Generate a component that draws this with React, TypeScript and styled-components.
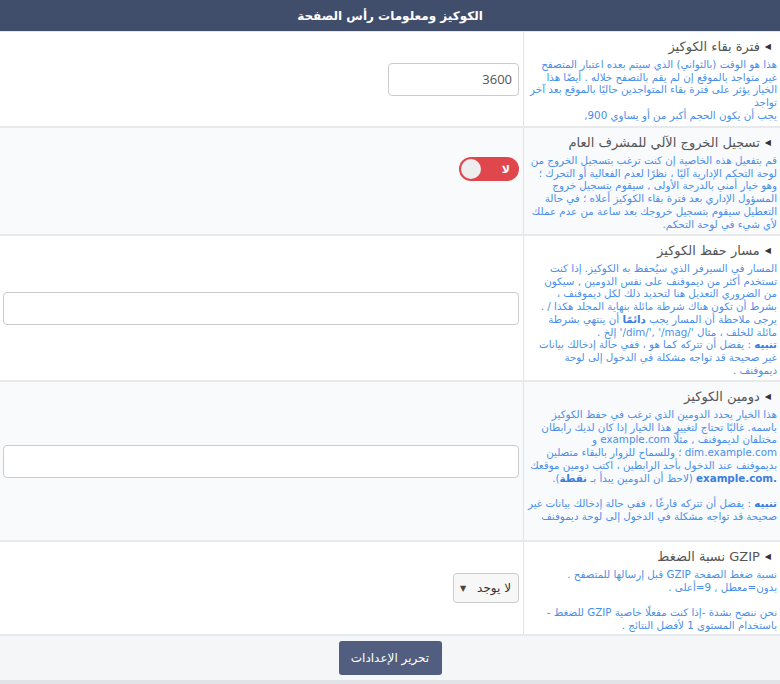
import React from "react";
import styled, { createGlobalStyle } from "styled-components";

const Global = createGlobalStyle`
  html, body { margin: 0; padding: 0; background: #fff; }
  body { font-family: "DejaVu Sans", sans-serif; }
  * { box-sizing: border-box; }
`;

const Page = styled.div`
  width: 780px;
  direction: rtl;
  background: #fff;
`;

const Header = styled.div`
  height: 32px;
  background: #404d6b;
  color: #fff;
  display: flex;
  align-items: center;
  justify-content: center;
  font-weight: bold;
  font-size: 12px;
  border-bottom: 1px solid #e3e5e8;
`;

const Row = styled.div<{ $alt?: boolean; $h: number }>`
  display: grid;
  grid-template-columns: 257px 1fr;
  height: ${(p) => p.$h}px;
  background: ${(p) => (p.$alt ? "#f9fafc" : "#fff")};
  border-bottom: 2px solid #e8e9eb;
`;

const Label = styled.div`
  border-left: 1px solid #e3e3e3;
  padding: 7px 3px 4px 4px;
  overflow: hidden;
`;

const Title = styled.div`
  color: #555;
  font-size: 13px;
  padding-right: 6px;
  margin-bottom: 4px;
  display: flex;
  align-items: center;
  gap: 5px;
`;

const Arrow = styled.span`
  font-size: 8px;
  color: #333;
`;

const Desc = styled.div`
  color: #4a8fe7;
  font-size: 10.3px;
  line-height: 12.7px;
  b { font-weight: bold; color: #3a7ee0; }
`;

const Control = styled.div<{ $nudge?: number }>`
  display: flex;
  align-items: center;
  padding: 0 4px ${(p) => p.$nudge ?? 0}px 3px;
`;

const Input = styled.input<{ $w?: number }>`
  width: ${(p) => (p.$w ? `${p.$w}px` : "100%")};
  height: 33px;
  border: 1px solid #ccc;
  border-radius: 4px;
  background: #fff;
  padding: 0 6px;
  font-family: "Open Sans", "Liberation Sans", sans-serif;
  font-size: 13px;
  color: #555;
  direction: rtl;
  outline: none;
`;

const Toggle = styled.div`
  width: 60px;
  height: 24px;
  border-radius: 12px;
  background: #e0474c;
  display: flex;
  align-items: center;
  justify-content: space-between;
  padding: 0 9px 0 2px;
`;

const ToggleText = styled.span`
  color: #fff;
  font-weight: bold;
  font-size: 11px;
`;

const Knob = styled.span`
  width: 20px;
  height: 20px;
  border-radius: 50%;
  background: #eeeeee;
`;

const Select = styled.div`
  width: 66px;
  height: 30px;
  border: 1px solid #ccc;
  border-radius: 4px;
  background: #f7f7f7;
  display: flex;
  align-items: center;
  justify-content: space-between;
  padding: 0 7px 0 6px;
  font-size: 12px;
  color: #333;
`;

const Caret = styled.span`
  font-size: 8px;
  color: #444;
`;

const Footer = styled.div`
  height: 48px;
  background: #f5f6f8;
  border-bottom: 4px solid #e1e3e6;
  display: flex;
  align-items: center;
  justify-content: center;
`;

const Button = styled.button`
  width: 103px;
  height: 34px;
  background: #515e7f;
  color: #fff;
  border: none;
  border-radius: 3px;
  font-family: "DejaVu Sans", sans-serif;
  font-size: 12px;
  cursor: pointer;
`;

const Field: React.FC<{ title: string; children: React.ReactNode }> = ({ title, children }) => (
  <Label>
    <Title>
      <Arrow>◀</Arrow>
      <span>{title}</span>
    </Title>
    <Desc>{children}</Desc>
  </Label>
);

export default function App() {
  return (
    <Page>
      <Global />
      <Header>الكوكيز ومعلومات رأس الصفحة</Header>

      <Row $h={96}>
        <Field title="فترة بقاء الكوكيز">
          هذا هو الوقت (بالثواني) الذي سيتم بعده اعتبار المتصفح غير متواجد بالموقع إن لم يقم بالتصفح خلاله . أيضًا هذا الخيار يؤثر على فترة بقاء المتواجدين حاليًا بالموقع بعد آخر تواجد
          <br />
          يجب أن يكون الحجم أكبر من أو يساوي 900,
        </Field>
        <Control>
          <Input $w={131} defaultValue="3600" />
        </Control>
      </Row>

      <Row $h={108} $alt>
        <Field title="تسجيل الخروج الآلي للمشرف العام">
          قم بتفعيل هذه الخاصية إن كنت ترغب بتسجيل الخروج من لوحة التحكم الإدارية آليًا ، نظرًا لعدم الفعالية أو التحرك ؛ وهو خيار أمني بالدرجة الأولى , سيقوم بتسجيل خروج المسؤول الإداري بعد فترة بقاء الكوكيز أعلاه ؛ في حالة التعطيل سيقوم بتسجيل خروجك بعد ساعة من عدم عملك لأي شيء في لوحة التحكم.
        </Field>
        <Control $nudge={24}>
          <Toggle>
            <ToggleText>لا</ToggleText>
            <Knob />
          </Toggle>
        </Control>
      </Row>

      <Row $h={146}>
        <Field title="مسار حفظ الكوكيز">
          المسار في السيرفر الذي سيُحفظ به الكوكيز. إذا كنت تستخدم أكثر من ديموفنف على نفس الدومين , سيكون من الضروري التعديل هنا لتحديد ذلك لكل ديموفنف ، بشرط أن تكون هناك شرطة مائلة بنهاية المجلد هكذا / . يرجى ملاحظة أن المسار يجب <b>دائمًا</b> أن ينتهي بشرطة مائلة للخلف ، مثال '/dim/', '/mag/' إلخ .
          <br />
          <b>تنبيه</b> : يفضل أن تتركه كما هو ، ففي حالة إدخالك بيانات غير صحيحة قد تواجه مشكلة في الدخول إلى لوحة ديموفنف .
        </Field>
        <Control>
          <Input />
        </Control>
      </Row>

      <Row $h={160} $alt>
        <Field title="دومين الكوكيز">
          هذا الخيار يحدد الدومين الذي ترغب في حفظ الكوكيز باسمه. غالبًا تحتاج لتغيير هذا الخيار إذا كان لديك رابطان مختلفان لديموفنف , مثلًا example.com و dim.example.com ؛ وللسماح للزوار بالبقاء متصلين بديموفنف عند الدخول بأحد الرابطين ، اكتب دومين موقعك <b>.example.com</b> (لاحظ أن الدومين يبدأ بـ <b>نقطة</b>).
          <br />
          <br />
          <b>تنبيه</b> : يفضل أن تتركه فارغًا ، ففي حالة إدخالك بيانات غير صحيحة قد تواجه مشكلة في الدخول إلى لوحة ديموفنف
        </Field>
        <Control>
          <Input />
        </Control>
      </Row>

      <Row $h={94}>
        <Field title="GZIP نسبة الضغط">
          نسبة ضغط الصفحة GZIP قبل إرسالها للمتصفح . بدون=معطل , 9=أعلى .
          <br />
          <br />
          نحن ننصح بشدة -إذا كنت مفعلًا خاصية GZIP للضغط - باستخدام المستوى 1 لأفضل النتائج .
        </Field>
        <Control>
          <Select>
            <span>لا يوجد</span>
            <Caret>▼</Caret>
          </Select>
        </Control>
      </Row>

      <Footer>
        <Button>تحرير الإعدادات</Button>
      </Footer>
    </Page>
  );
}
